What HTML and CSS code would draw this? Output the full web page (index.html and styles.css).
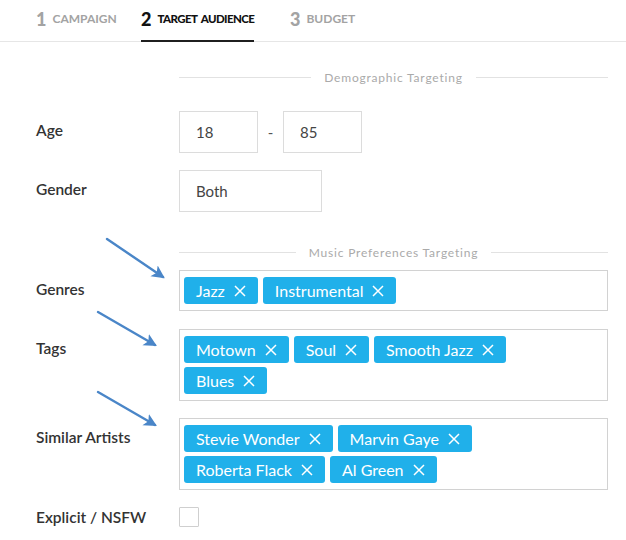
FILE: index.html
```html
<!DOCTYPE html>
<html>
<head>
<meta charset="utf-8">
<link rel="stylesheet" href="styles.css">
</head>
<body>
<div class="page">
  <nav class="tabs">
    <div class="tab tab-1"><span class="tab-inner"><span class="num">1</span><span class="label">CAMPAIGN</span></span></div>
    <div class="tab tab-2 active"><span class="tab-inner"><span class="num">2</span><span class="label">TARGET AUDIENCE</span></span></div>
    <div class="tab tab-3"><span class="tab-inner"><span class="num">3</span><span class="label">BUDGET</span></span></div>
  </nav>

  <form class="form">
    <div class="section section-1"><span class="rule"></span><span class="section-title">Demographic Targeting</span><span class="rule"></span></div>

    <div class="row row-age">
      <label class="field-label tall">Age</label>
      <div class="field range">
        <div class="input small">18</div>
        <span class="dash">-</span>
        <div class="input small">85</div>
      </div>
    </div>

    <div class="row row-gender">
      <label class="field-label tall">Gender</label>
      <div class="field">
        <div class="input medium">Both</div>
      </div>
    </div>

    <div class="section section-2"><span class="rule"></span><span class="section-title">Music Preferences Targeting</span><span class="rule"></span></div>

    <div class="row row-genres">
      <label class="field-label chiplabel">Genres</label>
      <div class="field chipbox">
        <span class="chip">Jazz<svg class="x" viewBox="0 0 12 12"><path d="M1 1L11 11M11 1L1 11"/></svg></span>
        <span class="chip">Instrumental<svg class="x" viewBox="0 0 12 12"><path d="M1 1L11 11M11 1L1 11"/></svg></span>
      </div>
    </div>

    <div class="row row-tags">
      <label class="field-label chiplabel">Tags</label>
      <div class="field chipbox">
        <span class="chip">Motown<svg class="x" viewBox="0 0 12 12"><path d="M1 1L11 11M11 1L1 11"/></svg></span>
        <span class="chip">Soul<svg class="x" viewBox="0 0 12 12"><path d="M1 1L11 11M11 1L1 11"/></svg></span>
        <span class="chip">Smooth Jazz<svg class="x" viewBox="0 0 12 12"><path d="M1 1L11 11M11 1L1 11"/></svg></span>
        <span class="chip">Blues<svg class="x" viewBox="0 0 12 12"><path d="M1 1L11 11M11 1L1 11"/></svg></span>
      </div>
    </div>

    <div class="row row-artists">
      <label class="field-label chiplabel">Similar Artists</label>
      <div class="field chipbox">
        <span class="chip">Stevie Wonder<svg class="x" viewBox="0 0 12 12"><path d="M1 1L11 11M11 1L1 11"/></svg></span>
        <span class="chip">Marvin Gaye<svg class="x" viewBox="0 0 12 12"><path d="M1 1L11 11M11 1L1 11"/></svg></span>
        <span class="chip">Roberta Flack<svg class="x" viewBox="0 0 12 12"><path d="M1 1L11 11M11 1L1 11"/></svg></span>
        <span class="chip">Al Green<svg class="x" viewBox="0 0 12 12"><path d="M1 1L11 11M11 1L1 11"/></svg></span>
      </div>
    </div>

    <div class="row row-explicit">
      <label class="field-label short">Explicit / NSFW</label>
      <div class="field"><span class="checkbox"></span></div>
    </div>
  </form>

  <svg class="arrows" width="626" height="540" viewBox="0 0 626 540">
    <defs>
      <marker id="head" markerWidth="6" markerHeight="6" refX="4.5" refY="3" orient="auto" markerUnits="strokeWidth">
        <path d="M0 0.3L5.4 3L0 5.7L1.3 3Z" fill="#4a86c8"/>
      </marker>
    </defs>
    <line x1="107" y1="239" x2="163" y2="277" class="arrow" marker-end="url(#head)"/>
    <line x1="98" y1="312" x2="155" y2="345" class="arrow" marker-end="url(#head)"/>
    <line x1="98" y1="392" x2="155" y2="425" class="arrow" marker-end="url(#head)"/>
  </svg>
</div>
</body>
</html>
```

FILE: styles.css
```css
html, body {
  margin: 0;
  padding: 0;
  background: #fff;
}

.page {
  position: relative;
  width: 626px;
  height: 540px;
  overflow: hidden;
  font-family: Lato, "Open Sans", "DejaVu Sans", sans-serif;
  color: #333;
}

/* Tabs */
.tabs {
  display: flex;
  box-sizing: border-box;
  height: 42px;
  padding-left: 36px;
  border-bottom: 1px solid #e6e6e6;
}
.tab {
  display: flex;
  align-items: stretch;
}
.tab-1 { width: 105px; }
.tab-2 { width: 149px; }
.tab-inner {
  display: flex;
  align-items: center;
  gap: 6px;
  margin-bottom: -1px;
  border-bottom: 2px solid transparent;
  padding-bottom: 3px;
  box-sizing: border-box;
}
.tab .num {
  font-size: 18px;
  font-weight: 900;
  color: #a3a3a3;
}
.tab .label {
  font-size: 12px;
  font-weight: 700;
  color: #a3a3a3;
}
.tab.active .tab-inner { border-bottom-color: #1f1f1f; }
.tab.active .num { color: #111; }
.tab.active .label {
  color: #111;
  font-weight: 900;
  font-size: 11.5px;
  letter-spacing: -0.6px;
  word-spacing: 2px;
}

/* Form */
.form {
  display: grid;
  grid-template-columns: 143px 429px;
  padding: 25px 0 0 36px;
}

.section {
  grid-column: 2;
  display: flex;
  align-items: center;
  gap: 13px;
  height: 20px;
  color: #aaaaaa;
  font-size: 12px;
  letter-spacing: 0.8px;
}
.section .rule {
  flex: 1;
  height: 1px;
  background: #e2e2e2;
}
.section-1 { margin-bottom: 24px; }
.section-2 { margin-top: 30px; margin-bottom: 8px; }

.row {
  grid-column: 1 / 3;
  display: grid;
  grid-template-columns: 143px 429px;
  align-items: start;
}
.row-age { margin-bottom: 17px; }
.row-genres { margin-bottom: 18px; }
.row-tags { margin-bottom: 17px; }
.row-artists { margin-bottom: 17px; }

.field-label {
  font-size: 15.5px;
  font-weight: 600;
  color: #333;
}
.field-label.tall { line-height: 39px; }
.field-label.chiplabel { line-height: 38px; }
.field-label.short { line-height: 20px; }

.field { display: flex; }
.range { align-items: center; }

.input {
  box-sizing: border-box;
  height: 42px;
  border: 1px solid #dcdcdc;
  padding-left: 16px;
  display: flex;
  align-items: center;
  font-size: 15px;
  color: #444;
}
.input.small { width: 79px; }
.input.medium { width: 143px; }
.dash {
  width: 25px;
  text-align: center;
  font-size: 15px;
  color: #555;
}

.chipbox {
  box-sizing: border-box;
  width: 429px;
  border: 1px solid #d2d2d2;
  padding: 6px 40px 6px 4px;
  flex-wrap: wrap;
  gap: 4px 5px;
}
.chip {
  display: inline-flex;
  align-items: center;
  gap: 9px;
  height: 27px;
  padding: 0 12px;
  border-radius: 3px;
  background: #20b0ea;
  color: #fff;
  font-size: 16px;
}
.chip .x {
  width: 12px;
  height: 12px;
  fill: none;
  stroke: #fff;
  stroke-width: 1.5;
}

.checkbox {
  box-sizing: border-box;
  width: 20px;
  height: 20px;
  border: 1px solid #cfcfcf;
  border-radius: 1px;
}

/* Annotation arrows overlay */
.arrows {
  position: absolute;
  left: 0;
  top: 0;
  pointer-events: none;
}
.arrow {
  stroke: #4a86c8;
  stroke-width: 2.4;
  stroke-linecap: round;
}
```
